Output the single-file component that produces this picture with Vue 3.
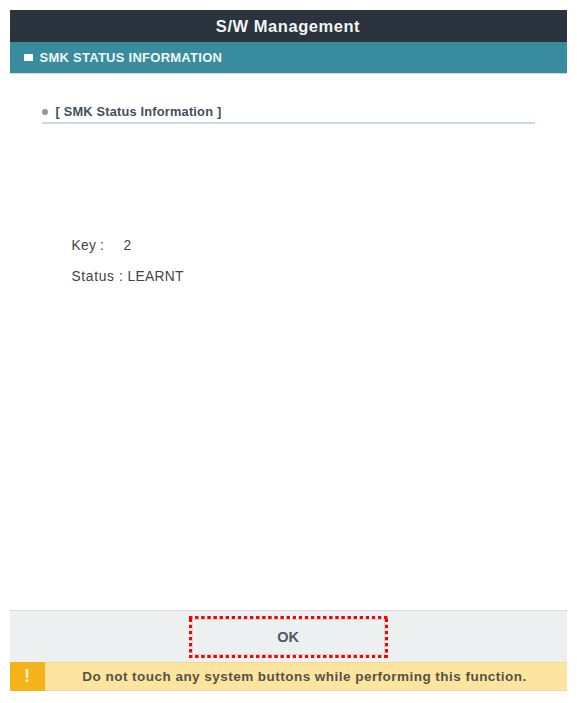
<script setup>
const rows = [
  { label: 'Key :', value: '2' },
  { label: 'Status :', value: 'LEARNT' }
]
</script>

<template>
  <div class="page">
    <div class="screen">
      <header class="title">S/W Management</header>
      <div class="section"><span class="square"></span>SMK STATUS INFORMATION</div>
      <main class="content">
        <div class="sub"><span class="dot"></span>[ SMK Status Information ]</div>
        <div class="rows">
          <div v-for="r in rows" :key="r.label" class="row">
            <span class="label">{{ r.label }}</span><span class="value">{{ r.value }}</span>
          </div>
        </div>
      </main>
      <div class="actions">
        <button class="ok"><span class="ok-inner">OK</span></button>
      </div>
      <div class="warn">
        <span class="warn-icon">!</span>
        <span class="warn-text">Do not touch any system buttons while performing this function.</span>
      </div>
    </div>
  </div>
</template>

<style>
html, body { margin: 0; background: #fff; }
</style>

<style scoped>
.page {
  width: 577px;
  height: 703px;
  padding: 10px 10px 12px 9.5px;
  box-sizing: border-box;
  background: #fff;
  font-family: "Liberation Sans", Arial, sans-serif;
}
.screen {
  width: 557px;
  height: 681px;
  display: flex;
  flex-direction: column;
}
.title {
  height: 32px;
  flex: none;
  background: #2b343e;
  color: #f2f4f5;
  font-weight: 700;
  font-size: 16.5px;
  letter-spacing: 0.55px;
  box-sizing: border-box;
  display: flex;
  align-items: center;
  justify-content: center;
}
.section {
  height: 32px;
  flex: none;
  background: #388c9d;
  color: #f0f6f7;
  font-weight: 700;
  font-size: 13px;
  letter-spacing: 0.26px;
  display: flex;
  align-items: center;
  padding-left: 14px;
  padding-bottom: 1px;
  box-sizing: border-box;
  border-bottom: 1px solid #c9e0e4;
}
.square {
  width: 9px;
  height: 7px;
  background: #fff;
  margin: 1px 7px 0 0;
}
.content {
  flex: 1;
  padding: 26px 32px 0 32px;
  min-height: 0;
}
.sub {
  display: flex;
  align-items: center;
  height: 22px;
  border-bottom: 2px solid #c4dde2;
  color: #434f5c;
  font-weight: 700;
  font-size: 12.8px;
  letter-spacing: 0.2px;
}
.dot {
  width: 6px;
  height: 6px;
  border-radius: 50%;
  background: #8f979e;
  margin: 2px 8px 0 0;
}
.rows {
  margin-top: 112px;
  padding-left: 30px;
  color: #444;
  font-size: 13.8px;
  letter-spacing: 0.25px;
}
.row {
  height: 31px;
  line-height: 20px;
}
.label { display: inline-block; }
.row:first-child .label { width: 52px; }
.row:last-child .label { margin-right: 4px; letter-spacing: 0.65px; }
.row:last-child .value { letter-spacing: 0.3px; }
.actions {
  height: 52px;
  flex: none;
  box-sizing: border-box;
  background: #edf0f0;
  border-top: 1px solid #d6d9d9;
  display: flex;
  justify-content: center;
  align-items: flex-start;
  padding-top: 5px;
}
.ok {
  width: 199px;
  height: 42px;
  box-sizing: border-box;
  border: 0;
  padding: 3px;
  background-color: #fff;
  background-image:
    linear-gradient(90deg, #f00 62%, transparent 0),
    linear-gradient(90deg, #f00 62%, transparent 0),
    linear-gradient(0deg, #f00 62%, transparent 0),
    linear-gradient(0deg, #f00 62%, transparent 0);
  background-size: 6.1px 3px, 6.1px 3px, 3px 6.1px, 3px 6.1px;
  background-position: 0 0, 0 100%, 0 0, 100% 0;
  background-repeat: repeat-x, repeat-x, repeat-y, repeat-y;
  font-family: inherit;
  display: flex;
}
.ok-inner {
  flex: 1;
  background: #edf0f0;
  border: 1px solid #d3d7d9;
  display: flex;
  align-items: center;
  justify-content: center;
  color: #4c5966;
  font-weight: 700;
  font-size: 14.5px;
}
.warn {
  height: 29px;
  flex: none;
  box-sizing: border-box;
  background: #fde49f;
  border-top: 1px solid #f6d98c;
  border-bottom: 1px solid #f6d98c;
  display: flex;
  align-items: center;
}
.warn-icon {
  width: 35px;
  height: 29px;
  flex: none;
  background: #f6b21b;
  color: #fff3d0;
  font-weight: 700;
  font-size: 18px;
  display: flex;
  align-items: center;
  justify-content: center;
  margin: -1px 0;
}
.warn-text {
  flex: 1;
  text-align: center;
  color: #555349;
  font-weight: 700;
  font-size: 13.5px;
  letter-spacing: 0.47px;
  margin-left: -2px;
}
</style>
